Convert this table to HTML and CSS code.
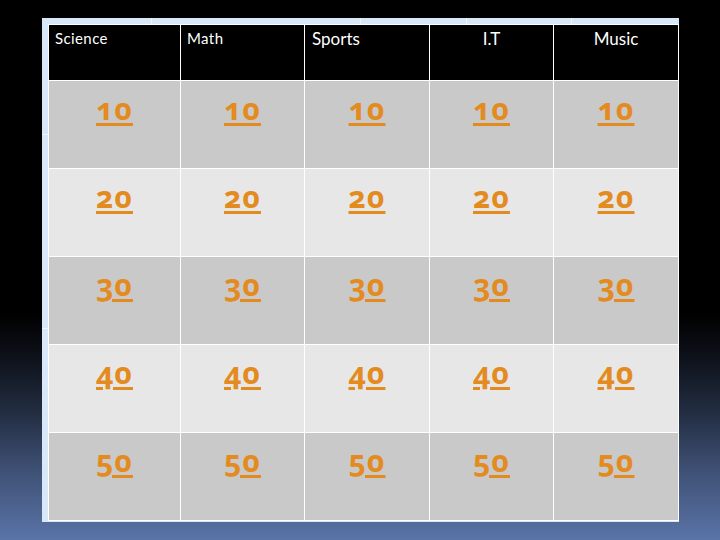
FILE: index.html
```html
<!DOCTYPE html>
<html>
<head>
<meta charset="utf-8">
<link rel="stylesheet" href="styles.css">
</head>
<body>
<div class="frame">
  <div class="board">
    <div class="head small left">Science</div>
    <div class="head small left">Math</div>
    <div class="head left">Sports</div>
    <div class="head center">I.T</div>
    <div class="head center">Music</div>

    <div class="cell dark"><a>10</a></div>
    <div class="cell dark"><a>10</a></div>
    <div class="cell dark"><a>10</a></div>
    <div class="cell dark"><a>10</a></div>
    <div class="cell dark"><a>10</a></div>

    <div class="cell light"><a>20</a></div>
    <div class="cell light"><a>20</a></div>
    <div class="cell light"><a>20</a></div>
    <div class="cell light"><a>20</a></div>
    <div class="cell light"><a>20</a></div>

    <div class="cell dark"><a>30</a></div>
    <div class="cell dark"><a>30</a></div>
    <div class="cell dark"><a>30</a></div>
    <div class="cell dark"><a>30</a></div>
    <div class="cell dark"><a>30</a></div>

    <div class="cell light"><a>40</a></div>
    <div class="cell light"><a>40</a></div>
    <div class="cell light"><a>40</a></div>
    <div class="cell light"><a>40</a></div>
    <div class="cell light"><a>40</a></div>

    <div class="cell dark"><a>50</a></div>
    <div class="cell dark"><a>50</a></div>
    <div class="cell dark"><a>50</a></div>
    <div class="cell dark"><a>50</a></div>
    <div class="cell dark"><a>50</a></div>
  </div>
</div>
</body>
</html>
```
FILE: styles.css
```css
html, body {
  margin: 0;
  padding: 0;
}
body {
  width: 720px;
  height: 540px;
  overflow: hidden;
  background: linear-gradient(to bottom, #000 0%, #000 58%, #0d1119 66%, #222c40 76%, #3e5074 87%, #5a74a8 100%);
  font-family: Lato, "Open Sans", sans-serif;
  padding-top: 18px;
  box-sizing: border-box;
}
.frame {
  margin-left: 42px;
  width: 637px;
  height: 504px;
  box-sizing: border-box;
  padding: 6px 0 0 6px;
  background-color: #d9e8f8;
  background-image:
    linear-gradient(to right, transparent 109px, #eef5fc 109px, #eef5fc 110px, transparent 110px,
      transparent 318px, #eef5fc 318px, #eef5fc 319px, transparent 319px,
      transparent 424px, #eef5fc 424px, #eef5fc 425px, transparent 425px,
      transparent 529px, #eef5fc 529px, #eef5fc 530px, transparent 530px),
    repeating-linear-gradient(to bottom, transparent 0, transparent 116px, #eef5fc 116px, #eef5fc 117px, transparent 117px, transparent 194px);
  background-size: 100% 6px, 6px 100%;
  background-repeat: no-repeat;
}
.board {
  display: grid;
  grid-template-columns: 131px 123px 124px 123px 124px;
  grid-template-rows: 55px repeat(5, 87px);
  gap: 1px;
  width: 631px;
  box-sizing: border-box;
  border: 1px solid #fff;
  border-right: 2px solid #fff;
  background: #fff;
}
.head {
  background: #000;
  color: #fff;
  font-size: 17px;
  padding-top: 3px;
  box-sizing: border-box;
  border-bottom: 1px solid #fff;
  height: 56px;
}
.head.small {
  font-size: 15px;
  letter-spacing: 0.4px;
  padding-top: 4px;
}
.left {
  padding-left: 6px;
}
.head:nth-child(3) {
  padding-left: 7px;
}
.center {
  text-align: center;
}
.cell {
  text-align: center;
  padding-top: 11px;
  box-sizing: border-box;
}
.dark {
  background: #c9c9c9;
}
.light {
  background: #e7e7e7;
}
.cell a {
  color: #e38b1f;
  font-family: "Noto Sans", sans-serif;
  font-weight: bold;
  font-size: 30px;
  line-height: 34px;
  text-decoration: underline;
  text-decoration-thickness: 3px;
  text-underline-offset: 3px;
  font-variant-numeric: oldstyle-nums;
  letter-spacing: 1px;
}
```
